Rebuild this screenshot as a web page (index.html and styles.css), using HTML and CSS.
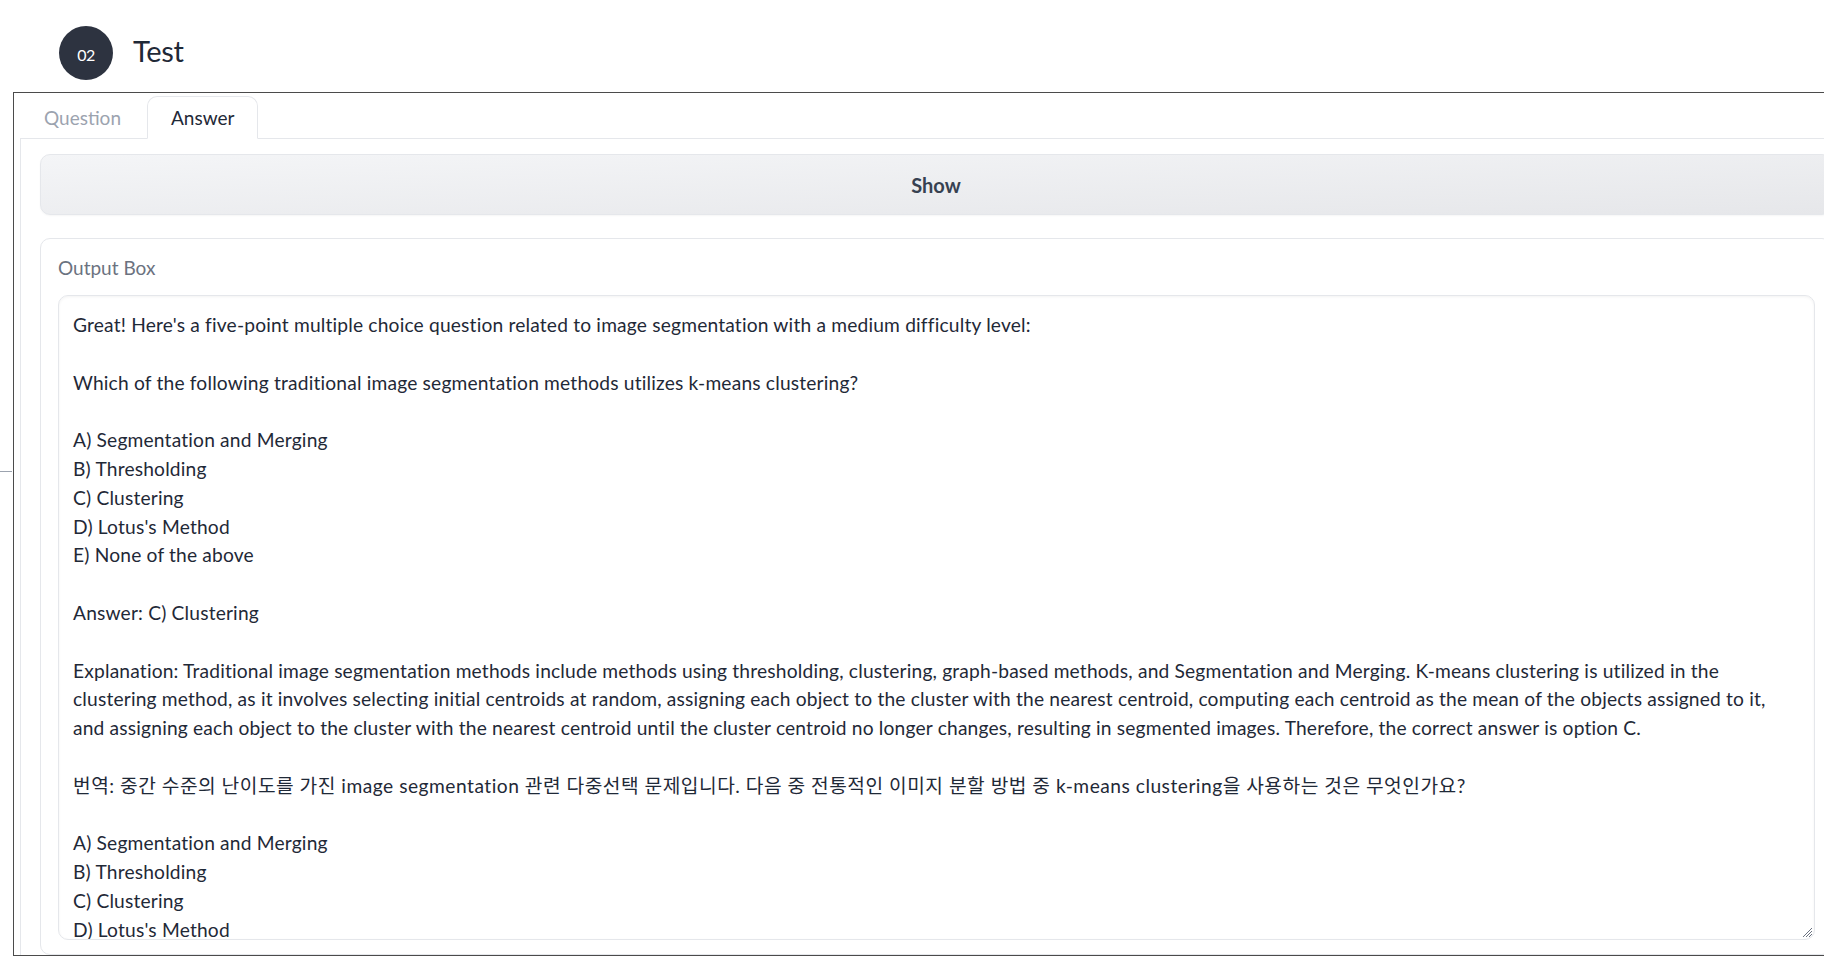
FILE: index.html
```html
<!DOCTYPE html>
<html lang="en">
<head>
<meta charset="utf-8">
<title>Test</title>
<link rel="stylesheet" href="styles.css">
</head>
<body>
<div class="edge-dash"></div>
<header class="header">
  <div class="badge">02</div>
  <h2 class="title">Test</h2>
</header>
<section class="frame">
  <div class="tabs">
    <nav class="tab-nav">
      <button class="tab">Question</button>
      <button class="tab tab-active">Answer</button>
    </nav>
    <div class="panel">
      <button class="show-btn">Show</button>
      <div class="output-box">
        <div class="label">Output Box</div>
        <div class="textarea">
<div class="text">Great! Here's a five-point multiple choice question related to image segmentation with a medium difficulty level:

Which of the following traditional image segmentation methods utilizes k-means clustering?

A) Segmentation and Merging
B) Thresholding
C) Clustering
D) Lotus's Method
E) None of the above

Answer: C) Clustering

Explanation: Traditional image segmentation methods include methods using thresholding, clustering, graph-based methods, and Segmentation and Merging. K-means clustering is utilized in the
clustering method, as it involves selecting initial centroids at random, assigning each object to the cluster with the nearest centroid, computing each centroid as the mean of the objects assigned to it,
and assigning each object to the cluster with the nearest centroid until the cluster centroid no longer changes, resulting in segmented images. Therefore, the correct answer is option C.

<span class="ko-line">번역: 중간 수준의 난이도를 가진 image segmentation 관련 다중선택 문제입니다. 다음 중 전통적인 이미지 분할 방법 중 k-means clustering을 사용하는 것은 무엇인가요?</span>

A) Segmentation and Merging
B) Thresholding
C) Clustering
D) Lotus's Method
E) None of the above</div>
          <svg class="resize" width="12" height="12" viewBox="0 0 12 12"><path d="M11 2 L2 11 M11 5 L5 11 M11 8 L8 11" stroke="#6b7280" stroke-width="1" fill="none"/></svg>
        </div>
      </div>
    </div>
  </div>
</section>
</body>
</html>
```
FILE: styles.css
```css
html, body {
  margin: 0;
  padding: 0;
  overflow: hidden;
  background: #ffffff;
}
body {
  width: 1880px;
  height: 960px;
  position: relative;
  font-family: Lato, "Noto Sans CJK KR", sans-serif;
  color: #1f2937;
}
.edge-dash {
  position: absolute;
  left: 0;
  top: 471px;
  width: 12px;
  height: 1px;
  background: #9ca3af;
}
.header {
  display: flex;
  align-items: center;
  gap: 20px;
  padding: 26px 0 0 59px;
  height: 54px;
}
.badge {
  width: 54px;
  height: 54px;
  border-radius: 50%;
  background: #2d3340;
  color: #ffffff;
  display: flex;
  align-items: center;
  justify-content: center;
  font-size: 16px;
  letter-spacing: -0.5px;
  padding-top: 2px;
  box-sizing: border-box;
}
.title {
  margin: 0 0 5px 0;
  font-size: 29px;
  font-weight: 400;
  color: #1f2937;
  letter-spacing: -0.3px;
}
.frame {
  margin: 12px 0 0 13px;
  width: 1840px;
  height: 864px;
  border: 1px solid #4b4b4b;
  box-sizing: border-box;
}
.tabs {
  padding: 3px 0 0 6px;
  height: 100%;
  box-sizing: border-box;
  display: flex;
  flex-direction: column;
}
.tab-nav {
  display: flex;
  gap: 2px;
  height: 42px;
  border-bottom: 1px solid #e5e7eb;
}
.tab {
  font-family: inherit;
  font-size: 19px;
  background: none;
  border: 1px solid transparent;
  padding: 0 23px;
  height: 43px;
  color: #9ca3af;
  border-radius: 10px 10px 0 0;
  cursor: pointer;
}
.tab-active {
  color: #1f2937;
  border-color: #e5e7eb;
  border-bottom-color: #ffffff;
  background: #ffffff;
  margin-bottom: -1px;
}
.panel {
  flex: 1;
  border-left: 1px solid #e5e7eb;
  padding: 15px 0 0 19px;
  display: flex;
  flex-direction: column;
  gap: 23px;
  min-height: 0;
}
.show-btn {
  width: 1792px;
  height: 61px;
  border: 1px solid #e5e7eb;
  border-radius: 10px;
  background: linear-gradient(to bottom right, #f4f5f7, #e6e7ea);
  font-family: inherit;
  font-size: 20px;
  font-weight: 700;
  color: #374151;
  box-shadow: 0 1px 2px rgba(0,0,0,0.04);
}
.output-box {
  width: 1792px;
  height: 717px;
  border: 1px solid #e5e7eb;
  border-radius: 10px;
  padding: 14px 17px 14px 17px;
  box-sizing: border-box;
  display: flex;
  flex-direction: column;
}
.label {
  font-size: 19px;
  line-height: 29px;
  color: #6b7280;
  margin-bottom: 13px;
}
.textarea {
  position: relative;
  height: 646px;
  border: 1px solid #e5e7eb;
  border-radius: 10px;
  box-shadow: inset 0 1px 3px rgba(0,0,0,0.05);
  padding: 15px 14px 0 14px;
  box-sizing: border-box;
  overflow: hidden;
  width: 1757px;
}
.text {
  white-space: pre;
  font-size: 19.2px;
  line-height: 28.8px;
  letter-spacing: 0.18px;
  color: #1f2937;
}
.ko-line {
  letter-spacing: 0.5px;
}
.resize {
  position: absolute;
  right: 1px;
  bottom: 1px;
}
```
